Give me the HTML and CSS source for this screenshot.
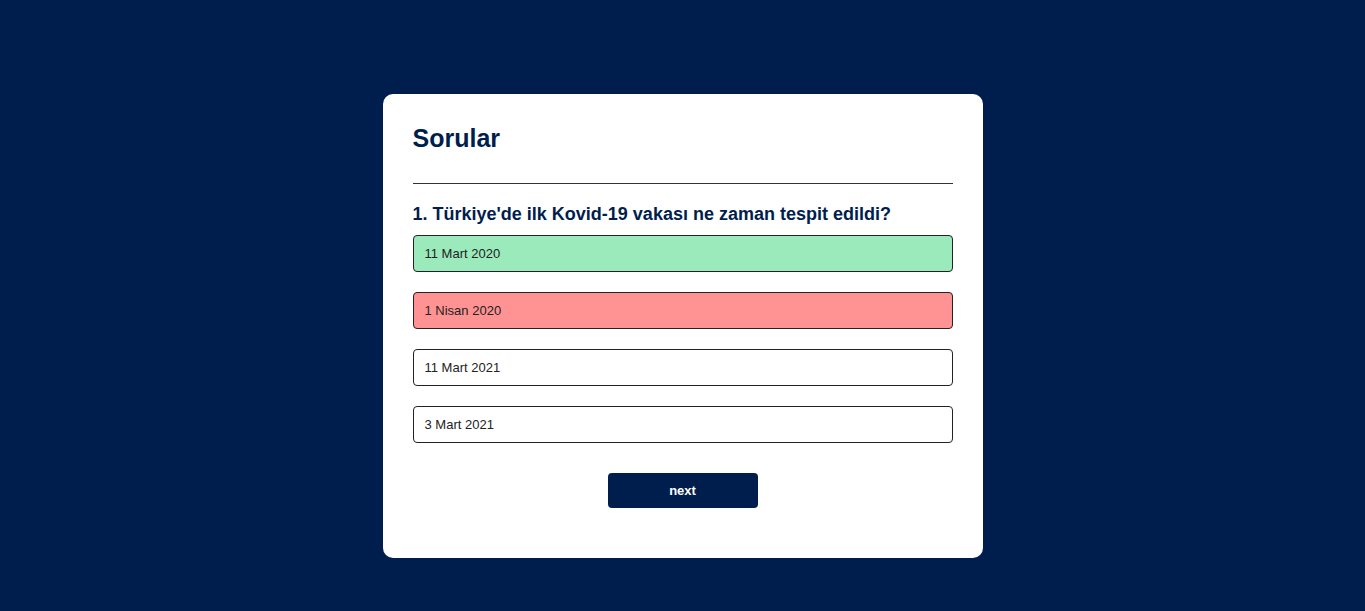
FILE: index.html
```html
<!DOCTYPE html>
<html lang="tr">
<head>
<meta charset="utf-8">
<title>Sorular</title>
<link rel="stylesheet" href="styles.css">
</head>
<body>
<main class="app">
  <h1 class="title">Sorular</h1>
  <div class="quiz">
    <h2 class="question">1. Türkiye'de ilk Kovid-19 vakası ne zaman tespit edildi?</h2>
    <div class="answers">
      <button class="btn correct">11 Mart 2020</button>
      <button class="btn incorrect">1 Nisan 2020</button>
      <button class="btn">11 Mart 2021</button>
      <button class="btn">3 Mart 2021</button>
    </div>
    <button class="next">next</button>
  </div>
</main>
</body>
</html>
```
FILE: styles.css
```css
* {
  margin: 0;
  padding: 0;
  box-sizing: border-box;
}
body {
  background: #001e4d;
  font-family: "Liberation Sans", Arial, sans-serif;
  padding-top: 94px;
}
.app {
  background: #fff;
  width: 600px;
  margin: 0 auto;
  border-radius: 10px;
  padding: 30px 30px 50px;
}
.title {
  font-size: 25px;
  font-weight: 700;
  color: #001e4d;
  border-bottom: 1px solid #333;
  padding-bottom: 30px;
}
.quiz {
  padding-top: 20px;
}
.question {
  font-size: 18px;
  font-weight: 700;
  color: #001e4d;
}
.answers {
  display: flex;
  flex-direction: column;
  gap: 20px;
  margin-top: 10px;
}
.btn {
  background: #fff;
  color: #222;
  font-family: "Liberation Sans", Arial, sans-serif;
  font-size: 13px;
  font-weight: 400;
  width: 100%;
  height: 37px;
  border: 1px solid #222;
  border-radius: 4px;
  padding: 0 11px;
  text-align: left;
}
.btn.correct {
  background: #9aeabc;
}
.btn.incorrect {
  background: #ff9393;
}
.next {
  display: block;
  background: #001e4d;
  color: #fff;
  font-family: "Liberation Sans", Arial, sans-serif;
  font-size: 13px;
  font-weight: 700;
  width: 150px;
  height: 35px;
  border: 0;
  border-radius: 4px;
  margin: 30px auto 0;
}
```
